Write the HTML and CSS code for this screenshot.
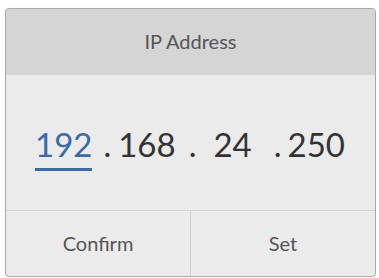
FILE: index.html
```html
<!DOCTYPE html>
<html>
<head>
<meta charset="utf-8">
<link rel="stylesheet" href="styles.css">
</head>
<body>
<div class="panel">
  <div class="header">IP Address</div>
  <div class="body">
    <div class="ip">
      <span class="seg active">192</span><span class="dot d1">.</span><span class="seg">168</span><span class="dot d2">.</span><span class="seg">24</span><span class="dot d3">.</span><span class="seg">250</span>
    </div>
  </div>
  <div class="footer">
    <div class="btn">Confirm</div>
    <div class="btn right">Set</div>
  </div>
</div>
</body>
</html>
```
FILE: styles.css
```css
html, body {
  margin: 0;
  padding: 0;
  background: #ffffff;
}
body {
  font-family: Lato, "Open Sans", sans-serif;
}
.panel {
  margin: 8px 0 0 5px;
  width: 369px;
  height: 267px;
  border: 1px solid #a9a9a9;
  border-radius: 4px;
  overflow: hidden;
  display: flex;
  flex-direction: column;
  background: #ebebeb;
  box-shadow: 0 0 1px rgba(0,0,0,0.15);
}
.header {
  height: 66px;
  background: #d5d5d5;
  display: flex;
  align-items: center;
  justify-content: center;
  font-size: 20px;
  color: #555555;
  padding-bottom: 2px;
  box-sizing: border-box;
}
.body {
  height: 136px;
  display: flex;
  align-items: center;
  padding-left: 29px;
  border-bottom: 1px solid #d6d6d6;
  box-sizing: border-box;
}
.ip {
  display: flex;
  align-items: baseline;
  font-size: 33px;
  color: #333333;
  margin-top: 10px;
}
.seg {
  display: inline-block;
}
.seg.active {
  color: #3b6aa6;
  border-bottom: 3px solid #3b6aa6;
  line-height: 1;
  padding-bottom: 7px;
}
.dot.d1 {
  margin: 0 7px 0 11px;
}
.dot.d2 {
  margin: 0 17px 0 13px;
}
.dot.d3 {
  margin: 0 6px 0 22px;
}
.footer {
  flex: 1;
  display: flex;
}
.btn {
  flex: 1;
  display: flex;
  align-items: center;
  justify-content: center;
  font-size: 20px;
  color: #555555;
  padding-bottom: 2px;
}
.btn.right {
  border-left: 1px solid #cfcfcf;
}
```
